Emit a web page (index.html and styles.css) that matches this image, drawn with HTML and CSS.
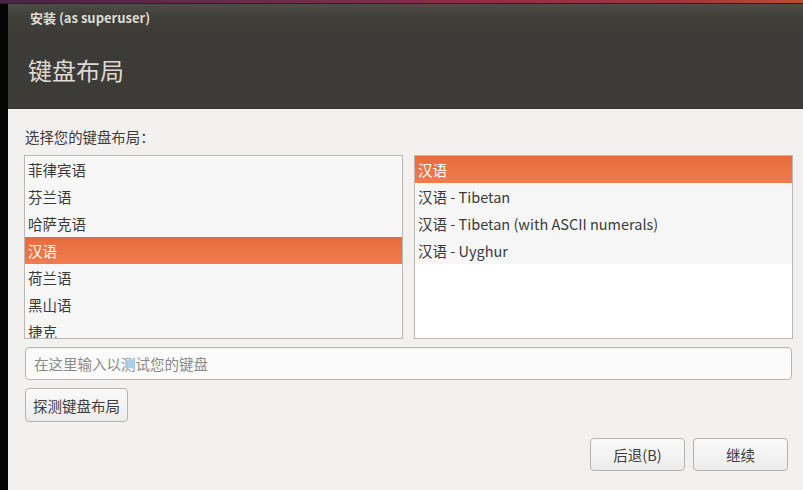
FILE: index.html
```html
<!DOCTYPE html>
<html lang="zh-CN">
<head>
<meta charset="utf-8">
<title>键盘布局</title>
<link rel="stylesheet" href="styles.css">
</head>
<body>
<div class="desk-top"></div>
<div class="frame">
  <div class="strip"></div>
  <div class="window">
    <header class="header">
      <div class="app-title">安装 (as superuser)</div>
      <h1 class="page-title">键盘布局</h1>
    </header>
    <main class="content">
      <div class="label">选择您的键盘布局：</div>
      <div class="lists">
        <div class="list list-left">
          <div class="row">菲律宾语</div>
          <div class="row">芬兰语</div>
          <div class="row">哈萨克语</div>
          <div class="row selected">汉语</div>
          <div class="row">荷兰语</div>
          <div class="row">黑山语</div>
          <div class="row">捷克</div>
        </div>
        <div class="list list-right">
          <div class="row selected">汉语</div>
          <div class="row">汉语 - Tibetan</div>
          <div class="row">汉语 - Tibetan (with ASCII numerals)</div>
          <div class="row">汉语 - Uyghur</div>
        </div>
      </div>
      <div class="test-input">在这里输入以测试您的键盘</div>
      <div class="detect-row"><button class="btn detect">探测键盘布局</button></div>
      <div class="actions">
        <button class="btn action">后退(B)</button>
        <button class="btn action">继续</button>
      </div>
    </main>
  </div>
</div>
</body>
</html>
```

FILE: styles.css
```css
* { box-sizing: border-box; }
html, body { margin: 0; padding: 0; }
body {
  width: 803px;
  height: 490px;
  overflow: hidden;
  background: #050505;
  font-family: "Noto Sans CJK SC", "Noto Sans", sans-serif;
  color: #3c3c3c;
}
.desk-top {
  height: 4px;
  background: linear-gradient(90deg, #4a2346 0%, #6e2a4c 30%, #8e2f47 60%, #9a3a3c 85%, #b2512e 100%);
  border-bottom: 1px solid #2a2222;
}
.frame {
  display: flex;
  height: 486px;
}
.strip {
  width: 8px;
  background: #050505;
  flex: none;
}
.window {
  flex: 1;
  display: flex;
  flex-direction: column;
  background: #f2f1f0;
}
.header {
  height: 105px;
  background: linear-gradient(#4e4d47 0px, #403f3a 12px, #3c3b37 30px, #3c3b37 100%);
  border-bottom: 1px solid #34332f;
  padding: 4px 0 0 22px;
  color: #dfdbd2;
}
.app-title {
  font-size: 13px;
  font-weight: bold;
  line-height: 20px;
}
.page-title {
  margin: 24px 0 0 -2px;
  font-size: 24px;
  font-weight: normal;
  line-height: 36px;
  color: #dcd9d2;
}
.content {
  flex: 1;
  padding: 18px 11px 0 16px;
  display: flex;
  flex-direction: column;
}
.label {
  font-size: 14.4px;
  line-height: 20px;
  padding-left: 1px;
  color: #3c3c3c;
}
.lists {
  margin-top: 8px;
  display: grid;
  grid-template-columns: 379px 379px;
  column-gap: 11px;
  height: 184px;
}
.list {
  border: 1px solid #b8b8b6;
  background: #f7f7f7;
  overflow: hidden;
}
.list-right { background: #ffffff; }
.list-right .row { background: #f6f6f6; }
.row {
  height: 27px;
  line-height: 27px;
  padding-left: 3px;
  font-size: 14.5px;
  color: #3a3a3a;
  white-space: nowrap;
}
.list-right .row.selected,
.row.selected {
  background: linear-gradient(#e66b3d, #f27c4e);
  color: #ffffff;
}
.test-input {
  margin: 8px 1px 0 1px;
  height: 33px;
  border: 1px solid #b6b6b4;
  border-radius: 4px;
  background: #fbfbfb;
  padding-left: 8px;
  line-height: 31px;
  font-size: 14.5px;
  color: #8a8a8a;
  box-shadow: inset 0 1px 1px rgba(0,0,0,0.04);
}
.detect-row {
  margin: 8px 0 0 1px;
  display: flex;
}
.btn {
  font-family: "Noto Sans CJK SC", "Noto Sans", sans-serif;
  font-size: 14.5px;
  color: #3c3c3c;
  border: 1px solid #b3b3b1;
  border-radius: 4px;
  background: linear-gradient(#fafafa, #ececec);
  padding: 0;
}
.detect {
  width: 103px;
  height: 34px;
}
.actions {
  margin-top: 16px;
  margin-right: 5px;
  display: flex;
  justify-content: flex-end;
  gap: 8px;
}
.action {
  width: 95px;
  height: 33px;
}
```
